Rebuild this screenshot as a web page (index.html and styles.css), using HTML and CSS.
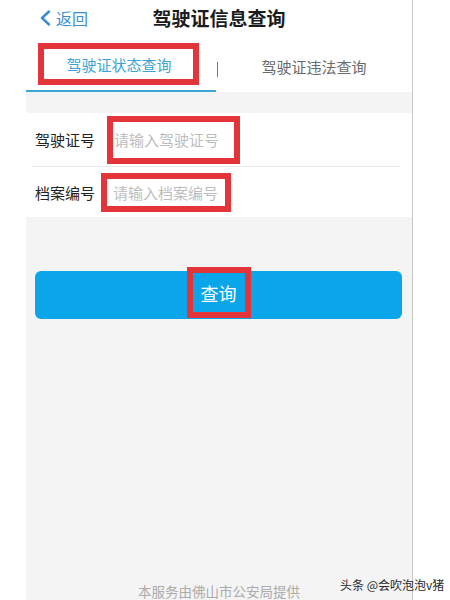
FILE: index.html
```html
<!DOCTYPE html>
<html lang="zh-CN">
<head>
<meta charset="utf-8">
<title>驾驶证信息查询</title>
<link rel="stylesheet" href="styles.css">
</head>
<body>
<div class="stage">
  <div class="gutter"></div>
  <main class="phone">
    <header class="topbar">
      <div class="back">
        <svg class="chev" width="12" height="16" viewBox="0 0 12 16"><polyline points="10,1.5 3,8 10,14.5" fill="none" stroke="#3a8bd0" stroke-width="2.4" stroke-linecap="round" stroke-linejoin="round"/></svg>
        <span>返回</span>
      </div>
      <h1 class="title">驾驶证信息查询</h1>
      <div></div>
    </header>
    <nav class="tabs">
      <div class="tab tab-active"><span class="mark mark-tab">驾驶证状态查询</span></div>
      <span class="sep"></span>
      <div class="tab tab-other">驾驶证违法查询</div>
    </nav>
    <div class="band"></div>
    <section class="form">
      <div class="row row-first">
        <span class="label">驾驶证号</span>
        <span class="mark field field-a">请输入驾驶证号</span>
      </div>
      <div class="row">
        <span class="label">档案编号</span>
        <span class="mark field field-b">请输入档案编号</span>
      </div>
    </section>
    <section class="rest">
      <button class="btn"><span class="mark mark-btn">查询</span></button>
      <p class="footer">本服务由佛山市公安局提供</p>
    </section>
  </main>
  <div class="side"></div>
</div>
<div class="watermark">头条 @会吹泡泡v猪</div>
</body>
</html>
```

FILE: styles.css
```css
* { box-sizing: border-box; }
html, body { margin: 0; padding: 0; background: #fff; }
body {
  width: 450px; height: 600px; overflow: hidden; position: relative;
  font-family: "Noto Sans CJK SC", "Noto Sans", sans-serif;
}
.stage { display: flex; height: 600px; }
.gutter { width: 26px; flex: none; }
.phone {
  width: 387px; flex: none; height: 600px; overflow: hidden;
  display: flex; flex-direction: column;
  border-right: 1px solid #c9c9c9;
  background: #fff;
}
.side { flex: 1; }

.topbar {
  height: 36px; display: grid; grid-template-columns: 1fr auto 1fr; align-items: center;
}
.back { display: flex; align-items: center; padding-left: 13px; color: #3b8fd4; font-size: 16px; }
.chev { margin-right: 5px; }
.title { margin: 0; font-size: 19px; font-weight: 700; color: #1c1c1c; line-height: 24px; }

.tabs { height: 56px; display: flex; }
.tab { flex: 1; display: flex; flex-direction: column; align-items: center; font-size: 15px; }
.tab-active { border-bottom: 2px solid #3aa6d8; padding-top: 7px; }
.tab-other { padding-top: 16px; line-height: 30px; color: #6a6a6a; padding-right: 3px; }
.sep { width: 1px; height: 15px; margin: 26px 1px 0; background: #777; flex: none; }

.mark { border: 6px solid #e3343a; }
.mark-tab {
  height: 42px; padding: 2px 21px 0 22px; line-height: 28px;
  color: #3ba3d3; margin-right: 5px; white-space: nowrap;
}

.band { height: 21px; background: #f4f4f4; }

.form { background: #fff; padding: 0 12px 0 6px; }
.row { display: flex; align-items: center; height: 50px; padding-left: 3px; }
.row-first { height: 54px; border-bottom: 1px solid #e8e8e8; }
.label { font-size: 15px; color: #222; width: 61px; white-space: nowrap; }
.field { font-size: 15px; color: #bdbdbd; white-space: nowrap; }
.field-a { margin-left: 11px; height: 48px; line-height: 36px; padding: 0 15px 0 1px; }
.field-b { margin-left: 5px; height: 39px; line-height: 27px; padding: 0 7px 0 6px; }

.rest { flex: 1; background: #f4f4f4; display: flex; flex-direction: column; }
.btn {
  margin: 54px 10px 0 9px; height: 48px; border: 0; border-radius: 6px;
  background: #0ba5ea; display: flex; align-items: center; justify-content: center;
  font-family: inherit; padding: 0;
}
.mark-btn {
  height: 51px; width: 64px; margin-top: -5px; display: flex; align-items: center; justify-content: center;
  color: #fff; font-size: 18px; line-height: 24px;
}
.footer {
  margin: auto 0 0; text-align: center; font-size: 13.5px; line-height: 18px; color: #ababab;
}

.watermark {
  position: absolute; left: 340px; top: 576px;
  font-size: 12px; line-height: 18px; color: #2a2a2a; white-space: nowrap;
}
```
